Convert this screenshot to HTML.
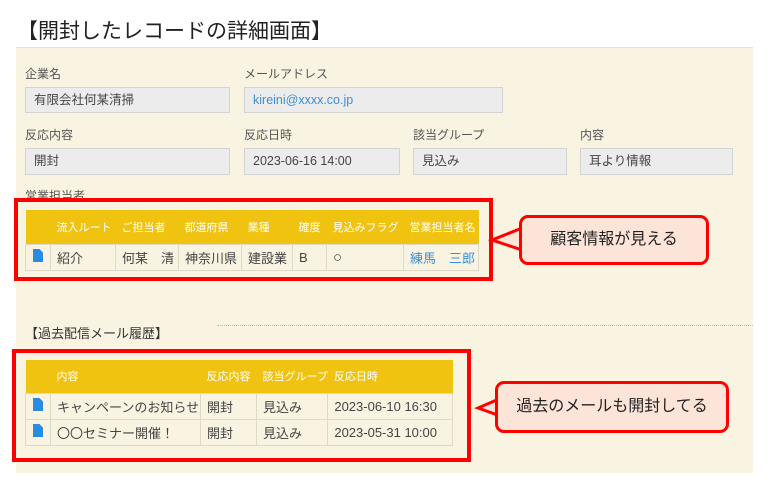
<!DOCTYPE html>
<html><head><meta charset="utf-8"><style>
*{margin:0;padding:0;box-sizing:border-box}
body{width:772px;height:491px;background:#fff;position:relative;font-family:"Liberation Sans","Noto Sans CJK JP",sans-serif;color:#333;overflow:hidden}
.abs{position:absolute}
.title{left:17px;top:18px;font-size:21px;color:#222;line-height:28px}
.panel{left:16px;top:47px;width:737px;height:426px;background:#f9f3e1;border-top:1px solid #e6e2d6}
.lbl{font-size:12px;color:#555;line-height:14px}
.inp{background:#ececec;border:1px solid #d3d3d3;font-size:12.5px;line-height:24px;padding-left:8px;color:#444}
table{border-collapse:collapse;font-size:13px;position:absolute}
th{background:#f0c311;color:#fff;font-weight:normal;font-size:11px;text-align:left;padding-left:6px;white-space:nowrap}
td{border:1px solid #ddd8c8;background:#f9f3e1;padding-left:6px;white-space:nowrap;color:#444}
.ic{display:inline-block;width:10px;height:13px;background:#2a8ce0;clip-path:polygon(0 0,65% 0,100% 28%,100% 100%,0 100%)}
.red{border:4px solid #f00}
.bubble{background:#fce4d8;border:3px solid #f00;border-radius:9px;font-size:16px;color:#222;text-align:center}
</style></head><body>
<div class="abs title">【開封したレコードの詳細画面】</div>
<div class="abs panel"></div>
<div class="abs lbl" style="left:25px;top:67px">企業名</div>
<div class="abs lbl" style="left:244px;top:67px">メールアドレス</div>
<div class="abs inp" style="left:25px;top:87px;width:205px;height:26px">有限会社何某清掃</div>
<div class="abs inp" style="left:244px;top:87px;width:259px;height:26px;color:#3b8fd8">kireini@xxxx.co.jp</div>
<div class="abs lbl" style="left:25px;top:128px">反応内容</div>
<div class="abs lbl" style="left:244px;top:128px">反応日時</div>
<div class="abs lbl" style="left:413px;top:128px">該当グループ</div>
<div class="abs lbl" style="left:580px;top:128px">内容</div>
<div class="abs inp" style="left:25px;top:148px;width:205px;height:27px">開封</div>
<div class="abs inp" style="left:244px;top:148px;width:156px;height:27px">2023-06-16 14:00</div>
<div class="abs inp" style="left:413px;top:148px;width:154px;height:27px">見込み</div>
<div class="abs inp" style="left:580px;top:148px;width:153px;height:27px">耳より情報</div>
<div class="abs lbl" style="left:25px;top:189px">営業担当者</div>

<table style="left:25px;top:210px;width:454px">
<tr style="height:34px"><th style="width:25px"></th><th style="width:65px">流入ルート</th><th style="width:63px">ご担当者</th><th style="width:63px">都道府県</th><th style="width:51px">業種</th><th style="width:34px">確度</th><th style="width:77px">見込みフラグ</th><th>営業担当者名</th></tr>
<tr style="height:26px"><td style="padding-left:7px"><span class="ic"></span></td><td>紹介</td><td>何某　清</td><td>神奈川県</td><td>建設業</td><td>B</td><td style="font-size:15px">○</td><td style="color:#3b8fd8">練馬　三郎</td></tr>
</table>
<div class="abs red" style="left:14px;top:198px;width:479px;height:83px"></div>
<svg class="abs" style="left:488px;top:222px" width="40" height="40"><polygon points="34,6 4,18 34,28" fill="#fce4d8" stroke="#f00" stroke-width="3"/></svg>
<div class="abs bubble" style="left:519px;top:215px;width:190px;height:50px;line-height:44px">顧客情報が見える</div>

<div class="abs" style="left:25px;top:323px;font-size:13px;color:#333">【過去配信メール履歴】</div>
<div class="abs" style="left:217px;top:325px;width:536px;border-top:1px dotted #bbb"></div>
<table style="left:25px;top:360px;width:428px">
<tr style="height:33px"><th style="width:25px"></th><th style="width:150px">内容</th><th style="width:56px">反応内容</th><th style="width:66px">該当グループ</th><th>反応日時</th></tr>
<tr style="height:26px"><td style="padding-left:7px"><span class="ic"></span></td><td>キャンペーンのお知らせ</td><td>開封</td><td>見込み</td><td>2023-06-10 16:30</td></tr>
<tr style="height:26px"><td style="padding-left:7px"><span class="ic"></span></td><td>〇〇セミナー開催！</td><td>開封</td><td>見込み</td><td>2023-05-31 10:00</td></tr>
</table>
<div class="abs red" style="left:12px;top:349px;width:459px;height:113px"></div>
<svg class="abs" style="left:474px;top:390px" width="40" height="40"><polygon points="32,6 4,18 32,28" fill="#fce4d8" stroke="#f00" stroke-width="3"/></svg>
<div class="abs bubble" style="left:495px;top:381px;width:234px;height:52px;line-height:46px">過去のメールも開封してる</div>
</body></html>
